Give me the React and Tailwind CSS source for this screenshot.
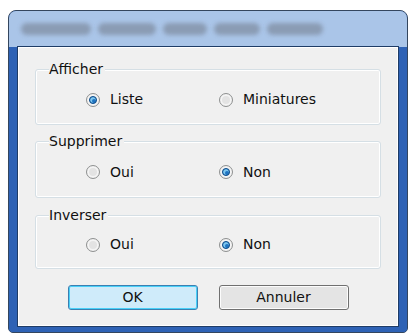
import React from "react";

function Radio({ checked }) {
  return (
    <span className="inline-flex w-[14px] h-[14px] shrink-0 rounded-full border border-[#8f9191] bg-[#e3e3e3] shadow-[inset_0_0_0_2px_#f4f4f4] items-center justify-center">
      {checked && (
        <span className="w-[8px] h-[8px] rounded-full bg-[#1f74c2] border border-[#0e4d8c] shadow-[inset_1px_1px_0_1px_#7cc6ef]" />
      )}
    </span>
  );
}

function Option({ checked, label }) {
  return (
    <label className="flex items-center gap-[10px] text-[14px] text-[#111]">
      <Radio checked={checked} />
      <span>{label}</span>
    </label>
  );
}

function Group({ title, children, className }) {
  return (
    <div className={"relative rounded-[3px] border border-[#d5dfe5] shadow-[inset_0_0_0_1px_#ffffff] " + className}>
      <span className="absolute left-[13px] -top-[9px] bg-[#f0f0f0] pr-[2px] text-[14px] leading-[16px] text-[#111]">
        {title}
      </span>
      <div className="grid grid-cols-[133px_1fr] pl-[50px] pt-[5px] h-full items-center">{children}</div>
    </div>
  );
}

function Blob({ w }) {
  return <div className={"h-[12px] rounded-full bg-[#8797ae] blur-[2px] opacity-90 " + w} />;
}

export default function App() {
  return (
    <div
      className="w-[410px] h-[334px] bg-white pl-[8px] pt-[10px] overflow-hidden"
      style={{ fontFamily: '"DejaVu Sans", Tahoma, sans-serif' }}
    >
      <div className="w-[400px] h-[323px] flex flex-col rounded-t-[8px] rounded-b-[5px] border border-[#34465e] bg-[#2e62b5] overflow-hidden">
        <div className="h-[36px] shrink-0 flex items-center gap-[7px] bg-[#aac5e8] pl-[12px] pr-[16px]">
          <Blob w="w-[70px]" />
          <Blob w="w-[58px]" />
          <Blob w="w-[44px]" />
          <Blob w="w-[46px]" />
          <Blob w="w-[56px]" />
        </div>
        <div className="flex-1 flex flex-col bg-[#2e62b5] px-[8px] pb-[5px]">
          <div className="-mt-px flex-1 flex flex-col border border-[#1f3c66] shadow-[inset_0_0_0_1px_#ffffff] bg-[#f0f0f0] px-[17px] pt-[22px]">
            <Group title="Afficher" className="h-[56px]">
              <Option checked label="Liste" />
              <Option label="Miniatures" />
            </Group>
            <Group title="Supprimer" className="h-[57px] mt-[16px]">
              <Option label="Oui" />
              <Option checked label="Non" />
            </Group>
            <Group title="Inverser" className="h-[54px] mt-[17px]">
              <Option label="Oui" />
              <Option checked label="Non" />
            </Group>
            <div className="flex justify-center gap-[21px] mt-[16px]">
              <button className="w-[130px] h-[25px] rounded-[3px] border border-[#3c7fb1] shadow-[inset_0_0_0_1px_#48d0f8] bg-[#cfebfa] text-[14px] text-[#111]">
                OK
              </button>
              <button className="w-[130px] h-[25px] rounded-[3px] border border-[#707070] shadow-[inset_0_0_0_1px_#fcfcfc] bg-[#e4e4e4] text-[14px] text-[#111]">
                Annuler
              </button>
            </div>
          </div>
        </div>
      </div>
    </div>
  );
}
